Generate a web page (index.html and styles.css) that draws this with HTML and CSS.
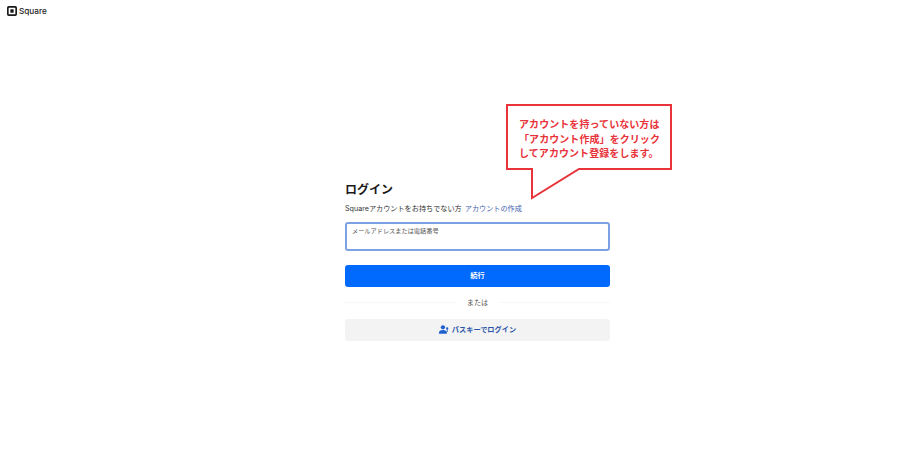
FILE: index.html
```html
<!DOCTYPE html>
<html lang="ja">
<head>
<meta charset="utf-8">
<title>Square ログイン</title>
<link rel="stylesheet" href="styles.css">
</head>
<body>
<header class="top">
  <svg class="logo" viewBox="0 0 12 12" width="10" height="10" aria-hidden="true">
    <path fill-rule="evenodd" fill="#1a1a1a" d="M2 0h8a2 2 0 0 1 2 2v8a2 2 0 0 1-2 2H2a2 2 0 0 1-2-2V2a2 2 0 0 1 2-2zm.6 2a.6.6 0 0 0-.6.6v6.800a.6.6 0 0 0 .6.6h6.800a.6.6 0 0 0 .6-.6V2.600a.6.6 0 0 0-.6-.6z"/>
    <rect x="4" y="4" width="4" height="4" rx=".4" fill="#1a1a1a"/>
  </svg>
  <span class="brand">Square</span>
</header>
<main class="form">
  <h1 class="title">ログイン</h1>
  <p class="sub"><span>Squareアカウントをお持ちでない方</span><a class="create" href="#">アカウントの作成</a></p>
  <div class="field"><span class="label">メールアドレスまたは電話番号</span></div>
  <button class="primary" type="button">続行</button>
  <div class="or"><span>または</span></div>
  <button class="passkey" type="button">
    <svg viewBox="0 0 14 12" width="10" height="9" aria-hidden="true">
      <circle cx="5.500" cy="3" r="3" fill="#1f5fd0"/>
      <path d="M0 12V10c0-2 2-3.400 5.500-3.400S11 8 11 10v2z" fill="#1f5fd0"/>
      <circle cx="11.500" cy="4.500" r="1.600" fill="#1f5fd0"/>
      <rect x="10.900" y="5" width="1.200" height="4.500" fill="#1f5fd0"/>
    </svg>
    <span>パスキーでログイン</span>
  </button>
</main>
<aside class="callout">
  <svg class="bubble" viewBox="0 0 170 100" width="170" height="100" aria-hidden="true">
    <path d="M2 2H166V66H74L27 95V66H2z" fill="#fff" stroke="#e8333a" stroke-width="2"/>
  </svg>
  <p class="note">アカウントを持っていない方は<br>「アカウント作成」をクリック<br>してアカウント登録をします。</p>
</aside>
</body>
</html>
```
FILE: styles.css
```css
* { box-sizing: border-box; }
html, body { margin: 0; height: 100%; }
body {
  position: relative;
  width: 900px;
  height: 450px;
  overflow: hidden;
  background: #fff;
  color: #1f1f1f;
  font-family: "Inter", "Noto Sans CJK JP", sans-serif;
}
.top {
  display: flex;
  align-items: center;
  gap: 2px;
  height: 11px;
  margin: 5px 0 0 7px;
}
.logo { display: block; }
.brand { padding-top: 1px; font-size: 8.200px; font-weight: 500; line-height: 11px; color: #222; }
.form {
  width: 265px;
  margin: 166px 0 0 345px;
  display: flex;
  flex-direction: column;
}
.title {
  margin: 0;
  font-size: 12px;
  line-height: 16px;
  font-weight: 700;
  color: #1a1a1a;
}
.sub {
  margin: 5px 0 0;
  display: flex;
  gap: 3px;
  font-size: 7.150px;
  line-height: 11px;
  color: #333;
}
.create { color: #3f62ad; text-decoration: none; }
.field {
  height: 29px;
  margin-top: 8px;
  padding: 2px 5px;
  border: 2px solid #7ba3e4;
  border-radius: 3px;
}
.label { display: block; font-size: 6.200px; line-height: 9px; color: #555; }
button { font-family: inherit; border: 0; padding: 0; }
.primary {
  height: 22px;
  margin-top: 14px;
  padding-bottom: 2px;
  border-radius: 3px;
  background: #006aff;
  color: #fff;
  font-size: 7.200px;
  font-weight: 700;
}
.or {
  display: flex;
  align-items: center;
  gap: 12px;
  height: 11px;
  margin-top: 10px;
  font-size: 7px;
  line-height: 11px;
  color: #555;
}
.or::before, .or::after {
  content: "";
  flex: 1;
  height: 1px;
  background: #f7f7f7;
}
.passkey {
  display: flex;
  align-items: center;
  justify-content: center;
  gap: 3px;
  height: 22px;
  margin-top: 11px;
  padding-bottom: 2px;
  border-radius: 3px;
  background: #f3f3f3;
  color: #2a55a8;
  font-size: 7.200px;
  font-weight: 700;
}
.callout {
  position: absolute;
  left: 505px;
  top: 103px;
  width: 170px;
  height: 100px;
}
.bubble { position: absolute; inset: 0; display: block; }
.note {
  position: absolute;
  left: 14px;
  top: 14px;
  margin: 0;
  white-space: nowrap;
  font-size: 10px;
  letter-spacing: 0.07px;
  line-height: 14.500px;
  font-weight: 700;
  color: #e8333a;
}
```
